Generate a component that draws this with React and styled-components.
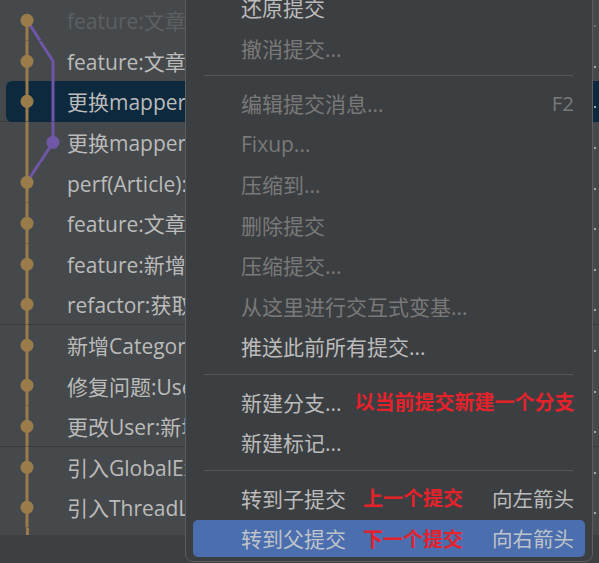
import React from 'react';
import styled, { createGlobalStyle } from 'styled-components';

const GlobalStyle = createGlobalStyle`
  html, body {
    margin: 0;
    padding: 0;
    background: #46494b;
  }
  body {
    font-family: "Open Sans", "Noto Sans CJK SC", sans-serif;
  }
`;

const GOLD = '#9a7c4b';
const PURPLE = '#6f56a6';

const Page = styled.div`
  position: relative;
  width: 599px;
  height: 563px;
  overflow: hidden;
  background: #46494b;
  display: flex;
  flex-direction: column;
`;

const Log = styled.div`
  display: flex;
  flex-direction: column;
`;

const Row = styled.div`
  height: 40.6px;
  display: flex;
  padding-left: 6px;
  box-shadow: ${p => (p.$divider ? 'inset 0 -1px 0 #3a3d3f' : 'none')};
`;

const RowBody = styled.div`
  flex: 1;
  min-width: 0;
  display: flex;
  align-items: center;
  border-radius: 6px 0 0 6px;
  background: ${p => (p.$selected ? '#0d293e' : 'transparent')};
`;

const Graph = styled.svg`
  flex-shrink: 0;
  display: block;
`;

/* the popup covers everything right of x=185, so the subject is clipped there */
const Subject = styled.span`
  flex: 0 1 118px;
  min-width: 0;
  overflow: hidden;
  white-space: nowrap;
  font-size: 21px;
  color: ${p => (p.$dim ? '#5c6063' : '#bbbbbb')};
`;

const RightDot = styled.span`
  flex-shrink: 0;
  width: 2px;
  height: 2px;
  margin: 12px 3px 0 auto;
  background: ${p => (p.$dim ? '#6a6d70' : '#a6a6a6')};
`;

const Tail = styled.div`
  height: 7px;
  &::before {
    content: '';
    display: block;
    margin-left: 25.5px;
    width: 3px;
    height: 100%;
    background: ${GOLD};
  }
`;

const BottomBar = styled.div`
  flex: 1;
  background: #3d4042;
`;

const Menu = styled.div`
  position: absolute;
  left: 185px;
  top: -14px;
  width: 408px;
  box-sizing: border-box;
  background: #3c3f41;
  border: 1px solid #5b5e61;
  border-radius: 0 0 8px 8px;
  padding-bottom: 2px;
  display: flex;
  flex-direction: column;
`;

const Item = styled.div`
  height: 40.5px;
  box-sizing: border-box;
  padding: 2px 7px;
  display: flex;
`;

const ItemBody = styled.div`
  flex: 1;
  display: flex;
  align-items: center;
  padding: 0 11px 0 48px;
  border-radius: 5px;
  background: ${p => (p.$active ? '#4b6eaf' : 'transparent')};
  font-size: 21px;
  white-space: nowrap;
  color: ${p => (p.$disabled ? '#797979' : p.$active ? '#bfc3ca' : '#bbbbbb')};
`;

const Note = styled.span`
  margin-left: ${p => p.$gap}px;
  color: #e5222b;
  font-size: 20px;
  font-weight: 700;
`;

const Shortcut = styled.span`
  margin-left: auto;
  font-size: 20.5px;
`;

const Separator = styled.div`
  height: 15px;
  display: flex;
  align-items: center;
  &::after {
    content: '';
    flex: 1;
    height: 1px;
    margin: 0 19px 0 18px;
    background: #54575a;
  }
`;

const H = 40.6;
const M = H / 2;

function GraphCell({ topLine = true, purple }) {
  return (
    <Graph width="61" height={H} viewBox={`0 0 61 ${H}`}>
      <line x1="21" y1={topLine ? 0 : M} x2="21" y2={H} stroke={GOLD} strokeWidth="3" />
      {purple === 'out' && <line x1="21" y1={M} x2="34" y2={H} stroke={PURPLE} strokeWidth="3" />}
      {purple === 'bend' && (
        <polyline points={`34,0 47,${M} 47,${H}`} fill="none" stroke={PURPLE} strokeWidth="3" />
      )}
      {purple === 'through' && <line x1="47" y1="0" x2="47" y2={H} stroke={PURPLE} strokeWidth="3" />}
      {purple === 'commit' && (
        <polyline points={`47,0 47,${M} 34,${H}`} fill="none" stroke={PURPLE} strokeWidth="3" />
      )}
      {purple === 'in' && <line x1="34" y1="0" x2="21" y2={M} stroke={PURPLE} strokeWidth="3" />}
      {purple === 'commit' ? (
        <circle cx="47" cy={M} r="6.5" fill={PURPLE} />
      ) : (
        <circle cx="21" cy={M} r="6.5" fill={GOLD} />
      )}
    </Graph>
  );
}

const commits = [
  { text: 'feature:文章详情页面接口', dim: true, topLine: false, purple: 'out' },
  { text: 'feature:文章归档列表查询', purple: 'bend' },
  { text: '更换mapper扫描方式', purple: 'through', selected: true, divider: true },
  { text: '更换mapper文件路径', purple: 'commit' },
  { text: 'perf(Article):优化文章查询', purple: 'in' },
  { text: 'feature:文章分页列表' },
  { text: 'feature:新增标签接口' },
  { text: 'refactor:获取最热标签', divider: true },
  { text: '新增Category分类接口' },
  { text: '修复问题:User登录校验' },
  { text: '更改User:新增字段', divider: true },
  { text: '引入GlobalExceptionHandler' },
  { text: '引入ThreadLocal保存用户' },
];

const actions = [
  { label: '还原提交' },
  { label: '撤消提交...', disabled: true },
  'sep',
  { label: '编辑提交消息...', disabled: true, shortcut: 'F2' },
  { label: 'Fixup...', disabled: true },
  { label: '压缩到...', disabled: true },
  { label: '删除提交', disabled: true },
  { label: '压缩提交...', disabled: true },
  { label: '从这里进行交互式变基...', disabled: true },
  { label: '推送此前所有提交...' },
  'sep',
  { label: '新建分支...', note: '以当前提交新建一个分支', gap: 13 },
  { label: '新建标记...' },
  'sep',
  { label: '转到子提交', note: '上一个提交', gap: 17, shortcut: '向左箭头' },
  { label: '转到父提交', note: '下一个提交', gap: 17, shortcut: '向右箭头', active: true },
];

export default function App() {
  return (
    <>
      <GlobalStyle />
      <Page>
        <Log>
          {commits.map((c, i) => (
            <Row key={i} $divider={c.divider}>
              <RowBody $selected={c.selected}>
                <GraphCell topLine={c.topLine !== false} purple={c.purple} />
                <Subject $dim={c.dim}>{c.text}</Subject>
                <RightDot $dim={c.dim} />
              </RowBody>
            </Row>
          ))}
          <Tail />
        </Log>
        <BottomBar />

        <Menu>
          {actions.map((a, i) =>
            a === 'sep' ? (
              <Separator key={i} />
            ) : (
              <Item key={i}>
                <ItemBody $disabled={a.disabled} $active={a.active}>
                  <span>{a.label}</span>
                  {a.note && <Note $gap={a.gap}>{a.note}</Note>}
                  {a.shortcut && <Shortcut>{a.shortcut}</Shortcut>}
                </ItemBody>
              </Item>
            )
          )}
        </Menu>
      </Page>
    </>
  );
}
